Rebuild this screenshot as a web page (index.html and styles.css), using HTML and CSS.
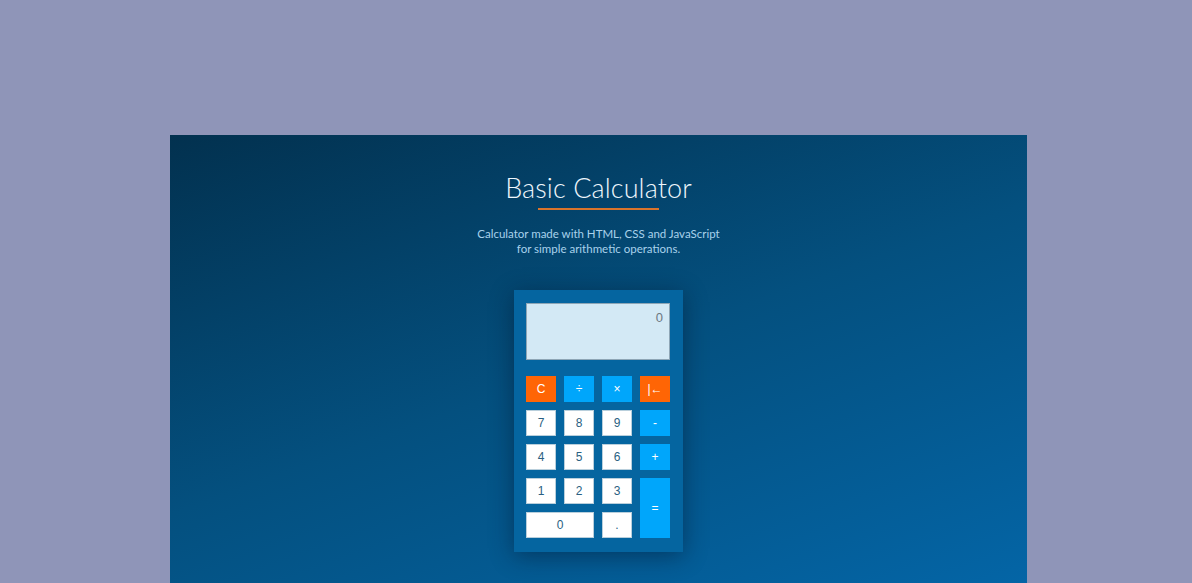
FILE: index.html
```html
<!DOCTYPE html>
<html lang="en">
<head>
<meta charset="utf-8">
<title>Basic Calculator</title>
<link rel="stylesheet" href="styles.css">
</head>
<body>
<main class="panel">
  <h1 class="title">Basic Calculator</h1>
  <div class="rule"></div>
  <p class="subtitle">Calculator made with HTML, CSS and JavaScript<br>for simple arithmetic operations.</p>
  <div class="calc">
    <div class="display">0</div>
    <div class="keys">
      <button class="key op-orange">C</button>
      <button class="key op-blue">÷</button>
      <button class="key op-blue">×</button>
      <button class="key op-orange">|←</button>
      <button class="key num">7</button>
      <button class="key num">8</button>
      <button class="key num">9</button>
      <button class="key op-blue">-</button>
      <button class="key num">4</button>
      <button class="key num">5</button>
      <button class="key num">6</button>
      <button class="key op-blue">+</button>
      <button class="key num">1</button>
      <button class="key num">2</button>
      <button class="key num">3</button>
      <button class="key op-blue equals">=</button>
      <button class="key num zero">0</button>
      <button class="key num">.</button>
    </div>
  </div>
</main>
</body>
</html>
```
FILE: styles.css
```css
html, body {
  margin: 0;
  padding: 0;
  overflow: hidden;
}
body {
  background: #8f95b8;
  padding-top: 135px;
  height: 448px;
}
.panel {
  margin-left: 170px;
  width: 857px;
  height: 448px;
  background: linear-gradient(160deg, #02314f 0%, #04507f 50%, #0465a6 100%);
  display: flex;
  flex-direction: column;
  align-items: center;
  font-family: "Lato", "Open Sans", sans-serif;
}
.title {
  margin: 37px 0 0;
  font-weight: 300;
  font-size: 27px;
  line-height: 32px;
  color: #eef6fc;
  letter-spacing: 0.1px;
}
.rule {
  width: 121px;
  height: 2px;
  background: #d9742c;
  margin-top: 4px;
}
.subtitle {
  margin: 16px 0 0;
  text-align: center;
  font-size: 11.5px;
  line-height: 15px;
  color: #a9d2ec;
}
.calc {
  margin-top: 34px;
  width: 144px;
  padding: 13px 13px 14px 12px;
  background: #0565a0;
  box-shadow: 0 4px 22px rgba(0, 18, 40, 0.45);
}
.display {
  box-sizing: border-box;
  height: 57px;
  background: #d3e9f5;
  border: 1px solid #8ea6b6;
  color: #6d7780;
  font-family: "Liberation Sans", Arial, sans-serif;
  font-size: 13px;
  text-align: right;
  padding: 6px 6px 0 0;
}
.keys {
  margin-top: 16px;
  display: grid;
  grid-template-columns: repeat(4, 30px);
  grid-template-rows: repeat(5, 26px);
  gap: 8px 8px;
}
.key {
  border: none;
  padding: 0;
  margin: 0;
  font-family: "Liberation Sans", Arial, sans-serif;
  font-size: 12px;
  color: #ffffff;
}
.op-orange { background: #ff6505; }
.op-blue { background: #00a6fb; }
.num {
  background: #ffffff;
  color: #2a5f82;
  border: 1px solid #b9cfdc;
}
.equals { grid-row: 4 / span 2; grid-column: 4; }
.zero { grid-column: 1 / span 2; }
```
